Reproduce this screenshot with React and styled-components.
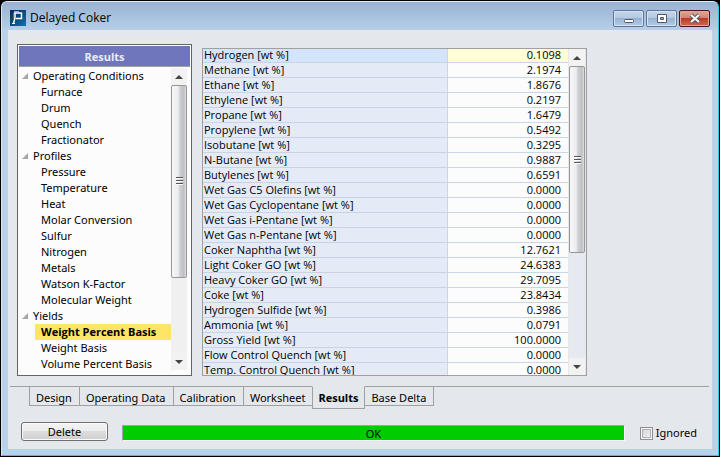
import React from "react";
import styled, { createGlobalStyle, css } from "styled-components";

const Global = createGlobalStyle`
  * { box-sizing: border-box; }
  html, body, #root { height: 100%; margin: 0; }
  body { background: #000; overflow: hidden; }
  #root { display: flex; padding: 1px; }
  body, button, input { font-family: "Noto Sans", sans-serif; font-size: 11px; color: #000; }
`;

const Window = styled.main`
  flex: 1;
  min-width: 0;
  display: flex;
  flex-direction: column;
  padding: 0 6px 6px;
  border: 1px solid #35c8dc;
  border-top-color: #dfe9f4;
  border-left-color: #d9e8f5;
  border-radius: 6px 6px 0 0;
  background: linear-gradient(#98b2d1 0, #b9d1ea 30px, #b9d1ea 100%);
`;

const TitleBar = styled.header`
  height: 28px;
  flex: none;
  display: flex;
  align-items: center;
  gap: 4px;
  padding: 4px 2px 0;
`;

const Title = styled.h1`
  flex: 1;
  margin: 0;
  font-family: "Open Sans", sans-serif;
  font-size: 12px;
  line-height: 16px;
  font-weight: 400;
`;

const Controls = styled.div`
  display: flex;
  gap: 2px;
`;

const ControlButton = styled.button`
  width: 31px;
  height: 17px;
  padding: 0;
  display: grid;
  place-items: center;
  border: 1px solid ${(p) => (p.$close ? "#4b1420" : "#5f7695")};
  border-radius: 2px;
  box-shadow: inset 0 0 0 1px ${(p) => (p.$close ? "#e3a596" : "#d4e2f1")};
  background: ${(p) =>
    p.$close
      ? "linear-gradient(#e6a497 0, #d37f70 50%, #b83c27 50%, #cf6a52 100%)"
      : "linear-gradient(#c4d6ea 0, #b3c8e0 50%, #98b3d2 50%, #b4cde8 100%)"};
`;

const Client = styled.div`
  flex: 1;
  min-height: 0;
  display: flex;
  flex-direction: column;
  padding: 14px 3px 0 2px;
  background: #e4e8ed;
`;

const Content = styled.div`
  flex: 1;
  min-height: 0;
  display: flex;
  gap: 10px;
  padding: 0 122px 0 7px;
`;

const Sidebar = styled.nav`
  width: 175px;
  flex: none;
  display: flex;
  flex-direction: column;
  padding: 1px;
  border: 1px solid #646464;
  background: #fcfcfc;
`;

const SidebarHeading = styled.h2`
  height: 21px;
  flex: none;
  margin: 0;
  line-height: 22px;
  font-family: "Open Sans", sans-serif;
  font-size: 11px;
  font-weight: 700;
  text-align: center;
  color: #e8ecf8;
  background: #7076bc;
  border-bottom: 1px solid #a0a0a0;
`;

const SidebarBody = styled.div`
  flex: 1;
  min-height: 0;
  display: flex;
  padding: 1px 3px 4px 0;
`;

const Tree = styled.ul`
  flex: 1;
  min-width: 0;
  margin: 0;
  padding: 0;
  list-style: none;
`;

const Branch = styled.li`
  display: flex;
  align-items: center;
  gap: 4px;
  height: 16px;
  padding-left: 3px;
  line-height: 16px;
  white-space: nowrap;
`;

const Leaf = styled.li`
  height: 16px;
  margin-left: 16px;
  padding-left: 6px;
  line-height: 16px;
  white-space: nowrap;
  ${(p) => p.$selected && css`
    font-family: "Open Sans", sans-serif;
    font-weight: 700;
    background: #ffe566;
  `}
`;

const Results = styled.section`
  flex: 1;
  min-width: 0;
  margin-top: 4px;
  display: flex;
  border: 1px solid #a0a0a0;
  overflow: hidden;
  background: #e4e8ed;
`;

const Table = styled.table`
  flex: 1;
  align-self: flex-start;
  margin-top: -1px;
  border-collapse: separate;
  border-spacing: 0;
  table-layout: fixed;
  font-family: "Open Sans", sans-serif;
`;

const NameCell = styled.th`
  width: 67%;
  height: 15px;
  padding: 0 1px;
  line-height: 14px;
  font-weight: 400;
  text-align: left;
  white-space: nowrap;
  background: ${(p) => (p.$active ? "#d3e4fb" : "#e4ebf7")};
  border-bottom: 1px solid #c9d3e4;
  border-right: 1px solid #cbd5e6;
`;

const ValueCell = styled.td`
  height: 15px;
  padding: 0 7px 0 0;
  line-height: 14px;
  text-align: right;
  background: ${(p) => (p.$active ? "#fffcd8" : "#fcfcfc")};
  border-bottom: 1px solid #c9d6e8;
`;

const ScrollTrack = styled.div`
  width: 16px;
  flex: none;
  display: flex;
  flex-direction: column;
  background: ${(p) => (p.$plain ? "#e6eaf0" : "#f0f0f1")};
  margin: ${(p) => (p.$plain ? "0 1px" : "0")};
`;

const ArrowButton = styled.button`
  height: 17px;
  flex: none;
  display: grid;
  place-items: center;
  padding: 0;
  border: 0;
  background: #f2f2f3;
`;

const Thumb = styled.div`
  flex: ${(p) => p.$share} 0 0;
  display: grid;
  place-items: center;
  border: 1px solid #979797;
  border-radius: 2px;
  background: linear-gradient(90deg, #f8f8f8 0, #ececee 45%, #d0d1d5 55%, #bfc0c5 85%, #e0e0e2 100%);
`;

const Space = styled.div`
  flex: ${(p) => p.$share} 0 0;
`;

const Tabs = styled.div`
  flex: none;
  display: flex;
  align-items: flex-start;
  height: 23px;
  margin-top: 10px;
`;

const TabLead = styled.span`
  width: 19px;
  border-top: 1px solid #a0a0a0;
`;

const TabRest = styled(TabLead)`
  flex: 1;
`;

const Tab = styled.button`
  height: ${(p) => (p.$active ? 23 : 20)}px;
  padding: 0 7px 0 6px;
  line-height: 22px;
  border: 1px solid #a0a0a0;
  border-left-width: ${(p) => (p.$first || p.$active ? 1 : 0)}px;
  border-right-width: ${(p) => (p.$beforeActive ? 0 : 1)}px;
  border-top-color: ${(p) => (p.$active ? "transparent" : "#a0a0a0")};
  background: transparent;
  ${(p) => p.$active && css`
    padding: 0 6px 0 5px;
    font-family: "Open Sans", sans-serif;
    font-weight: 700;
  `}
`;

const Footer = styled.footer`
  height: 40px;
  flex: none;
  display: flex;
  align-items: flex-start;
  padding: 13px 12px 0 11px;
`;

const DeleteButton = styled.button`
  width: 87px;
  height: 19px;
  padding: 0;
  border: 1px solid #707070;
  border-radius: 3px;
  box-shadow: inset 0 0 0 1px #fafafa;
  background: linear-gradient(#f4f4f4, #ebebeb 50%, #dddddd 50%, #cfcfcf);
  line-height: 16px;
`;

const Status = styled.output`
  flex: 1;
  height: 16px;
  margin: 3px 15px 0 14px;
  line-height: 15px;
  text-align: center;
  background: #00cc00;
  border: 1px solid #fff;
  border-top-color: #a0a0a0;
  border-left-color: #a0a0a0;
`;

const Ignore = styled.label`
  display: flex;
  align-items: center;
  gap: 3px;
  margin-top: 3px;
  line-height: 16px;
`;

const Check = styled.input`
  appearance: none;
  width: 13px;
  height: 13px;
  margin: 0;
  border: 1px solid #8e8f8f;
  box-shadow: inset 0 0 0 1px #f4f4f4, inset 0 0 0 2px #aeb3b9;
  background: linear-gradient(135deg, #cbcfd5, #f6f6f6);
`;

const groups = [
  ["Operating Conditions", ["Furnace", "Drum", "Quench", "Fractionator"]],
  ["Profiles", ["Pressure", "Temperature", "Heat", "Molar Conversion", "Sulfur", "Nitrogen", "Metals", "Watson K-Factor", "Molecular Weight"]],
  ["Yields", ["Weight Percent Basis", "Weight Basis", "Volume Percent Basis"]],
];

const rows = [
  ["Hydrogen", "0.1098"], ["Methane", "2.1974"], ["Ethane", "1.8676"], ["Ethylene", "0.2197"],
  ["Propane", "1.6479"], ["Propylene", "0.5492"], ["Isobutane", "0.3295"], ["N-Butane", "0.9887"],
  ["Butylenes", "0.6591"], ["Wet Gas C5 Olefins", "0.0000"], ["Wet Gas Cyclopentane", "0.0000"],
  ["Wet Gas i-Pentane", "0.0000"], ["Wet Gas n-Pentane", "0.0000"], ["Coker Naphtha", "12.7621"],
  ["Light Coker GO", "24.6383"], ["Heavy Coker GO", "29.7095"], ["Coke", "23.8434"],
  ["Hydrogen Sulfide", "0.3986"], ["Ammonia", "0.0791"], ["Gross Yield", "100.0000"],
  ["Flow Control Quench", "0.0000"], ["Temp. Control Quench", "0.0000"],
];

const tabs = ["Design", "Operating Data", "Calibration", "Worksheet", "Results", "Base Delta"];

function AppLogo() {
  return (
    <svg width="16" height="16" viewBox="0 0 16 16" aria-hidden="true">
      <defs>
        <linearGradient id="logo" x1="0" y1="0" x2="1" y2="1">
          <stop offset="0" stopColor="#12294f" />
          <stop offset="0.5" stopColor="#0c4a80" />
          <stop offset="1" stopColor="#1176ad" />
        </linearGradient>
      </defs>
      <rect width="16" height="16" fill="url(#logo)" />
      <path d="M3.5 3V9" stroke="#c0443c" />
      <path d="M4 1.5H9" stroke="#8cc66a" />
      <path d="M4 3H11.500V8.500H6" fill="none" stroke="#fff" strokeWidth="1.500" />
      <path d="M5 3V8L3.500 13.500" fill="none" stroke="#fff" strokeWidth="1.500" />
      <path d="M2 13.500H5" stroke="#fff" />
    </svg>
  );
}

function Arrow({ down }) {
  return (
    <svg width="8" height="4" viewBox="0 0 8 4" aria-hidden="true">
      <path d={down ? "M0 0H8L4 4Z" : "M0 4H8L4 0Z"} fill="#444" />
    </svg>
  );
}

function ScrollBar({ name, share, rest, plain }) {
  return (
    <ScrollTrack $plain={plain}>
      <ArrowButton aria-label={`Scroll ${name} up`}><Arrow /></ArrowButton>
      <Thumb $share={share}>
        <svg width="7" height="8" viewBox="0 0 7 8" aria-hidden="true">
          <path d="M0 .5H7M0 3.5H7M0 6.5H7" stroke="#555" />
          <path d="M0 1.5H7M0 4.5H7M0 7.5H7" stroke="#fff" />
        </svg>
      </Thumb>
      <Space $share={rest} />
      <ArrowButton aria-label={`Scroll ${name} down`}><Arrow down /></ArrowButton>
    </ScrollTrack>
  );
}

export default function App() {
  return (
    <>
      <Global />
      <Window>
        <TitleBar>
          <AppLogo />
          <Title>Delayed Coker</Title>
          <Controls>
            <ControlButton aria-label="Minimize">
              <svg width="12" height="11" viewBox="0 0 12 11">
                <rect x="1.5" y="6.5" width="9" height="3" rx="1" fill="#fff" stroke="#535666" />
              </svg>
            </ControlButton>
            <ControlButton aria-label="Maximize">
              <svg width="12" height="11" viewBox="0 0 12 11">
                <path d="M1.5 1.5H10.5V9.5H1.5ZM4.500 4.500V6.500H7.500V4.500Z" fill="#fff" fillRule="evenodd" stroke="#535666" />
              </svg>
            </ControlButton>
            <ControlButton aria-label="Close" $close>
              <svg width="12" height="11" viewBox="0 0 12 11">
                <path d="M2 2L10 9M10 2L2 9" stroke="#535666" strokeWidth="4" />
                <path d="M2 2L10 9M10 2L2 9" stroke="#fff" strokeWidth="2" />
              </svg>
            </ControlButton>
          </Controls>
        </TitleBar>
        <Client>
          <Content>
            <Sidebar>
              <SidebarHeading>Results</SidebarHeading>
              <SidebarBody>
                <Tree>
                  {groups.map(([name, items]) => (
                    <React.Fragment key={name}>
                      <Branch>
                        <svg width="7" height="7" viewBox="0 0 7 7" aria-hidden="true">
                          <path d="M6 0V6H0Z" fill="#a6a6a6" />
                        </svg>
                        {name}
                      </Branch>
                      {items.map((item) => (
                        <Leaf key={item} $selected={item === "Weight Percent Basis"}>{item}</Leaf>
                      ))}
                    </React.Fragment>
                  ))}
                </Tree>
                <ScrollBar name="list" share={192} rest={76} />
              </SidebarBody>
            </Sidebar>
            <Results>
              <Table>
                <tbody>
                  {rows.map(([name, value], i) => (
                    <tr key={name}>
                      <NameCell scope="row" $active={i === 0}>{name} [wt %]</NameCell>
                      <ValueCell $active={i === 0}>{value}</ValueCell>
                    </tr>
                  ))}
                </tbody>
              </Table>
              <ScrollBar name="table" share={186} rest={105} plain />
            </Results>
          </Content>
          <Tabs role="tablist">
            <TabLead />
            {tabs.map((tab, i) => (
              <Tab key={tab} role="tab" aria-selected={i === 4} $first={i === 0} $active={i === 4} $beforeActive={i === 3}>
                {tab}
              </Tab>
            ))}
            <TabRest />
          </Tabs>
          <Footer>
            <DeleteButton>Delete</DeleteButton>
            <Status>OK</Status>
            <Ignore><Check type="checkbox" />Ignored</Ignore>
          </Footer>
        </Client>
      </Window>
    </>
  );
}
